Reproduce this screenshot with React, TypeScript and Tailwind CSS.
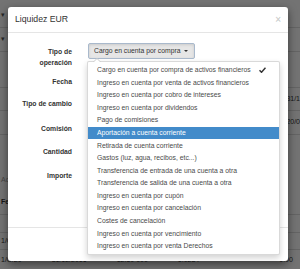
import React from 'react';

// ─────────────────────────────────────────────
// data
// ─────────────────────────────────────────────
const opciones = [
  'Cargo en cuenta por compra de activos financieros',
  'Ingreso en cuenta por venta de activos financieros',
  'Ingreso en cuenta por cobro de intereses',
  'Ingreso en cuenta por dividendos',
  'Pago de comisiones',
  'Aportación a cuenta corriente',
  'Retirada de cuenta corriente',
  'Gastos (luz, agua, recibos, etc...)',
  'Transferencia de entrada de una cuenta a otra',
  'Transferencia de salida de una cuenta a otra',
  'Ingreso en cuenta por cupón',
  'Ingreso en cuenta por cancelación',
  'Costes de cancelación',
  'Ingreso en cuenta por vencimiento',
  'Ingreso en cuenta por venta Derechos',
];

const SELECTED = 0;
const HOVER = 5;

// ─────────────────────────────────────────────
// page behind the modal (only edges visible)
// ─────────────────────────────────────────────
function PageBehind() {
  return (
    <div className="flex flex-col text-[7px] text-[#333]">
      <div className="h-[28px] border-b border-[#ddd] flex items-end pb-[7px] pl-[1px]">
        <span className="text-[#555]">▾</span>
      </div>
      <div className="h-[24px] border-b border-[#ddd] flex items-end pb-[7px] pl-[1px]">
        <span className="text-[#555]">▾</span>
      </div>
      <div className="h-[36px] border-b border-[#ddd]" />
      <div className="h-[23px] border-b border-[#ddd] flex items-center justify-end">
        <span className="mr-[0px]">31/1</span>
      </div>
      <div className="h-[24px] border-b border-[#ddd] flex items-center justify-end">
        <span className="mr-[0px]">20/0</span>
      </div>
      <div className="h-[34px]" />
      <div className="h-[22px] flex items-center pl-[1px] text-[#999]">Ac</div>
      <div className="h-[24px] border-b border-[#ddd] flex items-center pl-[1px] font-bold">Fecha</div>
      <div className="h-[18px] border-b border-[#ddd]" />
      <div className="h-[17px] border-b border-[#ddd] flex items-center pl-[1px]">1/C</div>
      <div className="h-[20px] flex items-center pl-[1px] gap-[30px]">
        <span>1/C/20</span>
        <span>31/12/2016</span>
        <span>12.50 000</span>
        <span>1.0234</span>
        <span className="ml-[50px]">0.00</span>
      </div>
    </div>
  );
}

function Check() {
  return (
    <svg width="7" height="6" viewBox="0 0 14 12" className="text-[#333]">
      <path d="M1 6.5 L5 10.5 L13 1.5" fill="none" stroke="currentColor" strokeWidth="3" />
    </svg>
  );
}

function Menu() {
  return (
    <div className="absolute left-[-1px] top-[18px] w-[193px] bg-white border border-black/15 rounded-[2px] shadow-[0_3px_6px_rgba(0,0,0,0.18)] py-[2px] z-10">
      {/* little arrow of the select */}
      <div className="absolute left-[5px] top-[-4px] w-0 h-0 border-l-[4px] border-r-[4px] border-b-[4px] border-l-transparent border-r-transparent border-b-[#ccc]" />
      <div className="absolute left-[6px] top-[-3px] w-0 h-0 border-l-[3px] border-r-[3px] border-b-[3px] border-l-transparent border-r-transparent border-b-white" />
      {opciones.map((o, i) => (
        <div
          key={o}
          className={
            'h-[12.57px] flex items-center justify-between pl-[9px] pr-[13px] text-[6.8px] whitespace-nowrap ' +
            (i === HOVER ? 'bg-[#428bca] text-white' : 'text-[#4a4a4a]')
          }
        >
          <span>{o}</span>
          {i === SELECTED && <Check />}
        </div>
      ))}
    </div>
  );
}

// ─────────────────────────────────────────────
// modal
// ─────────────────────────────────────────────
function Modal() {
  const labelCls = 'w-[64px] text-right font-bold text-[6.8px] leading-[11px] text-[#333]';
  return (
    <div className="absolute left-[8px] top-[7px] w-[280px] h-[254px] bg-white rounded-[3px] shadow-[0_3px_9px_rgba(0,0,0,0.5)] flex flex-col">
      <div className="h-[26px] shrink-0 border-b border-[#e5e5e5] flex items-center justify-between pl-[7px] pr-[7px]">
        <span className="text-[8.7px] text-[#333]">Liquidez EUR</span>
        <span className="text-[10px] leading-none text-black/20 font-bold">×</span>
      </div>

      <div className="flex-1 flex pt-[10px]">
        <div className="flex flex-col pt-[1px]">
          <div className={labelCls + ' h-[32px] pt-[1.5px]'}>
            Tipo de
            <br />
            operación
          </div>
          <div className={labelCls + ' h-[22px]'}>Fecha</div>
          <div className={labelCls + ' h-[25px]'}>Tipo de cambio</div>
          <div className={labelCls + ' h-[23px]'}>Comisión</div>
          <div className={labelCls + ' h-[24px]'}>Cantidad</div>
          <div className={labelCls + ' h-[24px]'}>Importe</div>
        </div>

        <div className="ml-[16px] relative">
          <div className="h-[16px] w-[107px] bg-[#e6e6e6] border border-[#a9b9cc] rounded-[2px] flex items-center pl-[5px] text-[6.8px] text-[#333] whitespace-nowrap shadow-[inset_0_1px_3px_rgba(0,0,0,0.12)]">
            Cargo en cuenta por compra
            <span className="ml-[3px] w-0 h-0 border-l-[2px] border-r-[2px] border-t-[2.5px] border-l-transparent border-r-transparent border-t-[#333]" />
          </div>
          <Menu />
        </div>
      </div>

      <div className="h-[34px] shrink-0 border-t border-[#e5e5e5]" />
    </div>
  );
}

export default function App() {
  return (
    <div
      className="relative w-[300px] h-[269px] overflow-hidden bg-white"
      style={{ fontFamily: '"Liberation Sans", Arial, sans-serif' }}
    >
      <PageBehind />
      <div className="absolute inset-0 bg-black/55" />
      <Modal />
    </div>
  );
}
